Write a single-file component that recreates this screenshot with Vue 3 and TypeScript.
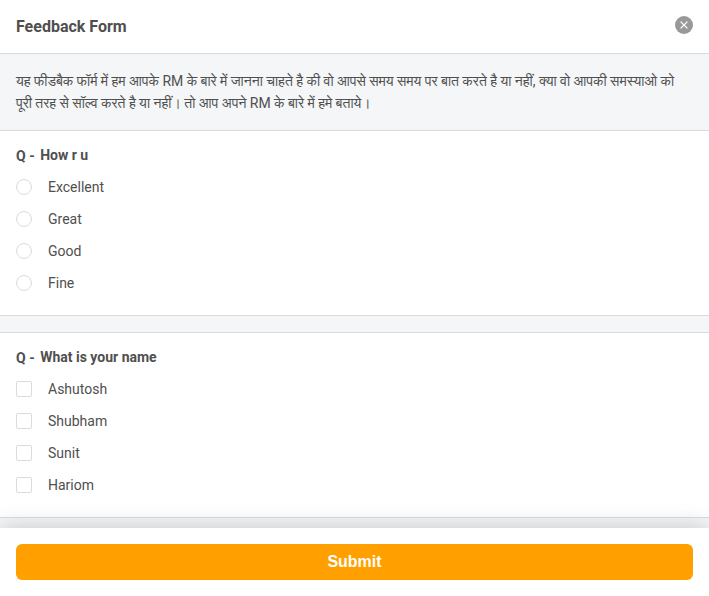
<script setup lang="ts">
interface Question {
  id: string
  title: string
  type: 'radio' | 'checkbox'
  options: string[]
}

const intro = 'यह फीडबैक फॉर्म में हम आपके RM के बारे में जानना चाहते है की वो आपसे समय समय पर बात करते है या नहीं, क्या वो आपकी समस्याओ को पूरी तरह से सॉल्व करते है या नहीं। तो आप अपने RM के बारे में हमे बताये।'

const questions: Question[] = [
  { id: 'q1', title: 'How r u', type: 'radio', options: ['Excellent', 'Great', 'Good', 'Fine'] },
  { id: 'q2', title: 'What is your name', type: 'checkbox', options: ['Ashutosh', 'Shubham', 'Sunit', 'Hariom'] },
]
</script>

<template>
  <form class="dialog" @submit.prevent>
    <header class="header">
      <h1 class="title">Feedback Form</h1>
      <button class="close" type="button">
        <svg width="18" height="18" viewBox="0 0 18 18">
          <circle cx="9" cy="9" r="9" fill="#999" />
          <path d="M5.6 5.6l6.8 6.8M12.4 5.6l-6.8 6.8" stroke="#fff" stroke-width="1.3" />
        </svg>
      </button>
    </header>
    <main class="body">
      <p class="intro">{{ intro }}</p>
      <section v-for="q in questions" :key="q.id" class="question">
        <h2 class="question-title"><span class="prefix">Q -</span><span>{{ q.title }}</span></h2>
        <label v-for="o in q.options" :key="o" class="option">
          <input class="control" :class="q.type" :type="q.type" :name="q.id" :value="o">
          <span>{{ o }}</span>
        </label>
      </section>
    </main>
    <footer class="footer">
      <button class="submit" type="submit">Submit</button>
    </footer>
  </form>
</template>

<style>
body { margin: 0; overflow: hidden; }
</style>

<style scoped>
.dialog {
  display: flex;
  flex-direction: column;
  height: 596px;
  background: #fff;
  color: #4f4f4f;
  font-family: Roboto, FreeSans, "Noto Sans", sans-serif;
  font-size: 14px;
}
.header {
  display: flex;
  flex: none;
  align-items: center;
  justify-content: space-between;
  box-sizing: border-box;
  height: 54px;
  padding: 0 16px;
  border-bottom: 1px solid #d9dbde;
}
.title { margin: 0; font-size: 16px; font-weight: 700; line-height: 24px; }
.close { display: flex; padding: 0; margin-bottom: 3px; border: 0; background: none; }
.body { flex: 1; min-height: 0; overflow: hidden; background: #f4f6f8; }
.intro { box-sizing: border-box; height: 76px; margin: 0; padding: 16px; line-height: 22px; word-spacing: -0.06px; }
.question {
  box-sizing: border-box;
  height: 186px;
  margin-bottom: 16px;
  padding: 13px 16px 0;
  border: solid #dbdbdb;
  border-width: 1px 0;
  background: #fff;
}
.question-title { display: flex; gap: 5.5px; margin: 0 0 5px; font-size: 14px; font-weight: 700; line-height: 22px; }
.prefix { padding-top: 1px; margin-bottom: -1px; }
.option { display: flex; align-items: center; gap: 16px; height: 32px; }
.control {
  appearance: none;
  box-sizing: border-box;
  width: 16px;
  height: 16px;
  margin: 0;
  border: 1px solid #dbdbdb;
  background: #fff;
}
.radio { border-radius: 50%; }
.checkbox { border-radius: 2px; }
.footer { position: relative; flex: none; box-sizing: border-box; height: 68px; padding: 16px; background: #fff; box-shadow: 0 0 24px rgba(0, 0, 0, 0.2); }
.submit {
  display: block;
  width: 100%;
  height: 36px;
  padding: 0;
  border: 0;
  border-radius: 6px;
  background: #ffa000;
  color: #fff;
  font: 700 16px/36px "Liberation Sans", sans-serif;
}
</style>
